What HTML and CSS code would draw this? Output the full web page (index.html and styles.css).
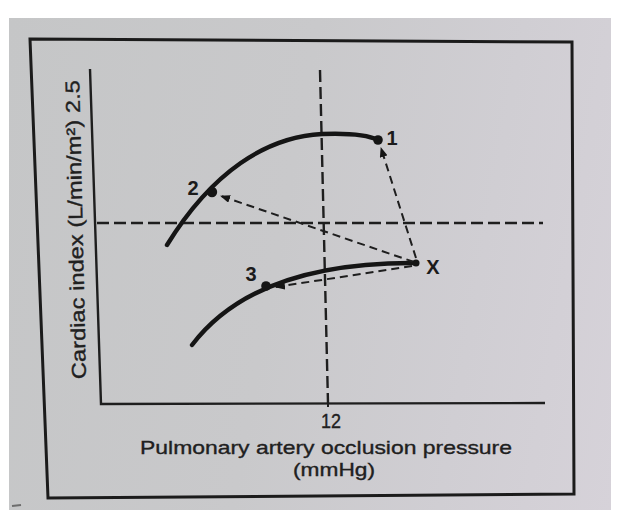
FILE: index.html
```html
<!DOCTYPE html>
<html lang="en">
<head>
<meta charset="utf-8">
<title>Cardiac index vs pulmonary artery occlusion pressure</title>
<link rel="stylesheet" href="styles.css">
</head>
<body>
<div class="photo">
  <svg class="figure" width="602" height="492" viewBox="9 18 602 492" xmlns="http://www.w3.org/2000/svg">
    <defs>
      <marker id="arrow" viewBox="0 0 10 8" refX="9" refY="4" markerWidth="10" markerHeight="8" markerUnits="userSpaceOnUse" orient="auto">
        <path d="M0 0 L10 4 L0 8 Z" class="ink-fill"/>
      </marker>
    </defs>

    <!-- frame -->
    <path class="frame" d="M30 39 L572 42 L574 494 L48 498 Z"/>

    <!-- axes -->
    <path class="axis" d="M90 69 L101 404 L545 403"/>
    <path class="tick" d="M328 403 L328 407"/>

    <!-- reference lines -->
    <path class="refline" d="M320 70 L328 403"/>
    <path class="refline" d="M97 223 L543 223"/>

    <!-- curves -->
    <path class="curve" d="M167 245 C 212 172, 266 137, 322 134 C 348 133, 368 135, 378 140"/>
    <path class="curve" d="M192 345 C 230 295, 300 262, 417 263"/>

    <!-- moves from X -->
    <path class="move" d="M416 258 L381 148" marker-end="url(#arrow)"/>
    <path class="move" d="M414 262 L221 196" marker-end="url(#arrow)"/>
    <path class="move" d="M412 266 L276 287" marker-end="url(#arrow)"/>

    <!-- points -->
    <circle class="ink-fill" cx="378" cy="140" r="4.8"/>
    <circle class="ink-fill" cx="212" cy="192" r="5.2"/>
    <circle class="ink-fill" cx="266" cy="286" r="4.8"/>
    <circle class="ink-fill" cx="416" cy="263" r="3.5"/>

    <text class="pt" x="392" y="145" text-anchor="middle">1</text>
    <text class="pt" x="193" y="195" text-anchor="middle">2</text>
    <text class="pt" x="251" y="281" text-anchor="middle">3</text>
    <text class="pt" x="433" y="274" text-anchor="middle">X</text>

    <!-- axis labels -->
    <text class="lbl" x="331" y="428" text-anchor="middle" textLength="20" lengthAdjust="spacingAndGlyphs">12</text>
    <text class="lbl lbl-x" x="140" y="454" textLength="372" lengthAdjust="spacingAndGlyphs">Pulmonary artery occlusion pressure</text>
    <text class="lbl lbl-x" x="293" y="476" textLength="82" lengthAdjust="spacingAndGlyphs">(mmHg)</text>
    <text class="lbl" x="0" y="0" transform="translate(86 379) rotate(-91.3)" textLength="299" lengthAdjust="spacingAndGlyphs">Cardiac index (L/min/m²) 2.5</text>

    <path class="scrap" d="M12 506 L21 505"/>
  </svg>
</div>
</body>
</html>
```

FILE: styles.css
```css
html, body {
  margin: 0;
  padding: 0;
  background: #ffffff;
}

body {
  width: 620px;
  height: 520px;
  overflow: hidden;
  font-family: "Liberation Sans", Arial, sans-serif;
}

.photo {
  margin: 18px 0 0 9px;
  width: 602px;
  height: 492px;
  background: linear-gradient(100deg, #c5c6c7 0%, #c9c9cb 45%, #d0ced3 75%, #d6d2d9 100%);
}

.figure {
  display: block;
}

.frame {
  fill: none;
  stroke: #1b1b1b;
  stroke-width: 3;
  stroke-linejoin: miter;
}

.axis {
  fill: none;
  stroke: #1e1e1e;
  stroke-width: 2.4;
}

.tick {
  stroke: #1e1e1e;
  stroke-width: 2;
}

.refline {
  fill: none;
  stroke: #1e1e1e;
  stroke-width: 2.4;
  stroke-dasharray: 12 5;
}

.curve {
  fill: none;
  stroke: #151515;
  stroke-width: 4.4;
  stroke-linecap: round;
}

.move {
  fill: none;
  stroke: #1e1e1e;
  stroke-width: 2;
  stroke-dasharray: 8 5;
}

.ink-fill {
  fill: #151515;
}

.pt {
  font-family: "Liberation Sans", Arial, sans-serif;
  font-size: 20px;
  font-weight: 700;
  fill: #1b1b1b;
}

.lbl {
  font-family: "Liberation Sans", Arial, sans-serif;
  font-size: 20px;
  fill: #202020;
  stroke: #202020;
  stroke-width: 0.35;
}

.lbl-x {
  font-size: 19px;
}

.scrap {
  stroke: #6d6d6d;
  stroke-width: 2;
}
```
